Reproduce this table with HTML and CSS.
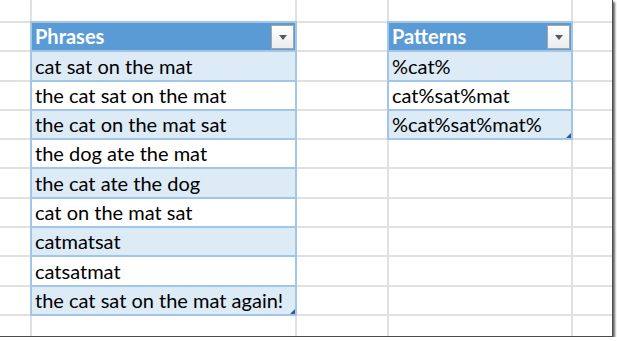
FILE: index.html
```html
<!DOCTYPE html>
<html lang="en">
<head>
    <meta charset="UTF-8">
    <title>Phrases and patterns</title>
    <link rel="stylesheet" href="styles.css">
</head>
<body>
    <div class="sheet">
        <table class="grid">
            <colgroup>
                <col class="col-a">
                <col class="col-b">
                <col class="col-c">
                <col class="col-d">
                <col class="col-e">
            </colgroup>
            <tr class="row-top"><td></td><td></td><td></td><td></td><td></td></tr>
            <tr>
                <td></td>
                <td class="tb head"><div class="head-in"><span>Phrases</span><span class="filter"></span></div></td>
                <td></td>
                <td class="tb head"><div class="head-in"><span>Patterns</span><span class="filter"></span></div></td>
                <td></td>
            </tr>
            <tr>
                <td></td>
                <td class="tb band">cat sat on the mat</td>
                <td></td>
                <td class="tb band">%cat%</td>
                <td></td>
            </tr>
            <tr>
                <td></td>
                <td class="tb">the cat sat on the mat</td>
                <td></td>
                <td class="tb">cat%sat%mat</td>
                <td></td>
            </tr>
            <tr>
                <td></td>
                <td class="tb band">the cat on the mat sat</td>
                <td></td>
                <td class="tb band corner">%cat%sat%mat%</td>
                <td></td>
            </tr>
            <tr>
                <td></td>
                <td class="tb">the dog ate the mat</td>
                <td></td><td></td><td></td>
            </tr>
            <tr>
                <td></td>
                <td class="tb band">the cat ate the dog</td>
                <td></td><td></td><td></td>
            </tr>
            <tr>
                <td></td>
                <td class="tb">cat on the mat sat</td>
                <td></td><td></td><td></td>
            </tr>
            <tr>
                <td></td>
                <td class="tb band">catmatsat</td>
                <td></td><td></td><td></td>
            </tr>
            <tr>
                <td></td>
                <td class="tb">catsatmat</td>
                <td></td><td></td><td></td>
            </tr>
            <tr>
                <td></td>
                <td class="tb band corner">the cat sat on the mat again!</td>
                <td></td><td></td><td></td>
            </tr>
            <tr><td></td><td></td><td></td><td></td><td></td></tr>
        </table>
    </div>
</body>
</html>
```

FILE: styles.css
```css
* {
    box-sizing: border-box;
}

body {
    margin: 0;
    background: #fff;
}

.sheet {
    width: 613px;
    height: 337px;
    overflow: hidden;
    background: #fff;
    border-right: 1px solid #4a4a4a;
    border-bottom: 1px solid #4a4a4a;
    box-shadow: 2px 2px 2px rgba(0, 0, 0, 0.6);
}

/* gridlines come from rows and columns, so cell borders of the tables win */
.grid {
    border-collapse: collapse;
    table-layout: fixed;
    width: 632px;
    font-family: Lato, sans-serif;
    font-size: 20px;
    color: #000;
}

.grid col {
    border-right: 2px solid #e1e1e1;
}

.grid tr {
    border-bottom: 2px solid #e1e1e1;
}

.col-a { width: 31px; }
.col-b { width: 265px; }
.col-c { width: 92px; }
.col-d { width: 184px; }
.col-e { width: 60px; }

.grid td {
    height: 29.3px;
    padding: 0 3px 4px;
    vertical-align: bottom;
    white-space: nowrap;
    line-height: 1;
}

.grid .row-top td {
    height: 22px;
}

.tb {
    border: 2px solid #a2c6e8;
}

.band {
    background: #ddebf7;
}

.grid .head {
    background: #5b9bd5;
    color: #fff;
    font-weight: bold;
    padding: 0 1px 1px 3px;
}

.head-in {
    display: flex;
    justify-content: space-between;
    align-items: flex-end;
}

.head-in span:first-child {
    padding-bottom: 3px;
}

.filter {
    position: relative;
    width: 23px;
    height: 24px;
    border: 1px solid #a6a6a6;
    background: linear-gradient(#fff, #ececec);
}

.filter::after {
    content: "";
    position: absolute;
    left: 7px;
    top: 9px;
    border-left: 4px solid transparent;
    border-right: 4px solid transparent;
    border-top: 5px solid #5a5a5a;
}

.corner {
    position: relative;
}

.corner::after {
    content: "";
    position: absolute;
    right: 0;
    bottom: 0;
    border-left: 5px solid transparent;
    border-bottom: 5px solid #2f5b9e;
}
```
